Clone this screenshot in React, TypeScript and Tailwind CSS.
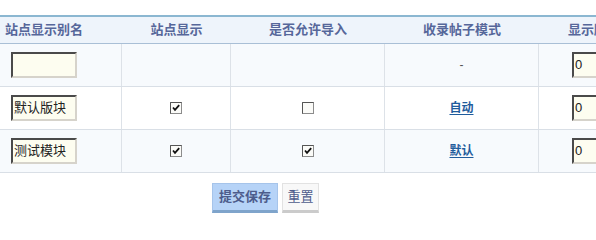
const font = "font-['Liberation_Sans','Noto_Sans_CJK_SC',sans-serif]"

const rows = [
    { name: "", show: null as boolean | null, allow: null as boolean | null, mode: "-", order: "0" },
    { name: "默认版块", show: true, allow: false, mode: "自动", order: "0" },
    { name: "测试模块", show: true, allow: true, mode: "默认", order: "0" },
]

const cols = "grid grid-cols-[122px_109px_154px_154px_160px]"

function Box({ checked }: { checked: boolean }) {
    return (
        <svg width="12" height="12" viewBox="0 0 12 12">
            <rect x="0.5" y="0.5" width="11" height="11" fill="#fbfbf8" stroke="#8c8c8c" />
            <path d="M0.5 11.5V0.5H11.5" fill="none" stroke="#555" />
            {checked && <path d="M3 5.5 5 7.8 9.2 3.2" fill="none" stroke="#111" strokeWidth="1.8" />}
        </svg>
    )
}

function TextInput({ value, width }: { value: string; width: string }) {
    return (
        <div
            className={`${width} h-[26px] bg-[#fdfdf0] border-2 border-t-[#4a4a4a] border-l-[#4a4a4a] border-b-[#d6d3cb] border-r-[#d6d3cb] px-[1px] pt-[3px] text-[13px] leading-[16px] text-[#222]`}
        >
            {value}
        </div>
    )
}

export default function App() {
    return (
        <div className={`w-[596px] h-[233px] bg-white overflow-hidden ${font}`}>
            <div className="pt-[15px] w-[700px]">
                {/* Header */}
                <div className={`${cols} h-[29px] bg-[#eef4fb] border-t-2 border-[#8bb7d1] border-b border-b-[#a9bfd6] text-[13px] font-bold text-[#56679a]`}>
                    <div className="flex items-center pl-[5px]">站点显示别名</div>
                    <div className="flex items-center justify-center">站点显示</div>
                    <div className="flex items-center justify-center">是否允许导入</div>
                    <div className="flex items-center justify-center">收录帖子模式</div>
                    <div className="flex items-center pl-[29px]">显示顺序</div>
                </div>

                {/* Rows */}
                {rows.map((r, i) => (
                    <div
                        key={i}
                        className={`${cols} h-[43px] border-b border-[#d9dfe6] ${i === 1 ? "bg-white" : "bg-[#f7fafd]"}`}
                    >
                        <div className="flex items-center pl-[11px] border-r border-[#dde2e8]">
                            <TextInput value={r.name} width="w-[66px]" />
                        </div>
                        <div className="flex items-center justify-center border-r border-[#dde2e8]">
                            {r.show !== null && <Box checked={r.show} />}
                        </div>
                        <div className="flex items-center justify-center border-r border-[#dde2e8]">
                            {r.allow !== null && <Box checked={r.allow} />}
                        </div>
                        <div className="flex items-center justify-center border-r border-[#dde2e8] text-[12px]">
                            {r.mode === "-" ? (
                                <span className="text-[#555]">-</span>
                            ) : (
                                <a className="font-bold text-[#1f5c9c] underline underline-offset-2">{r.mode}</a>
                            )}
                        </div>
                        <div className="flex items-center pl-[33px]">
                            <TextInput value={r.order} width="w-[40px]" />
                        </div>
                    </div>
                ))}

                {/* Buttons */}
                <div className="flex gap-[4px] pl-[212px] mt-[10px]">
                    <button className="w-[66px] h-[30px] bg-[#b6d3f7] border border-[#a6c4ea] border-b-[3px] border-b-[#7fa4cb] text-[13px] font-bold text-[#4d5c8c]">
                        提交保存
                    </button>
                    <button className="w-[37px] h-[30px] bg-[#f8f8f8] border border-[#e2e2e2] border-b-[3px] border-b-[#cbcbcb] text-[13px] text-[#4d5c8c]">
                        重置
                    </button>
                </div>
            </div>
        </div>
    )
}
